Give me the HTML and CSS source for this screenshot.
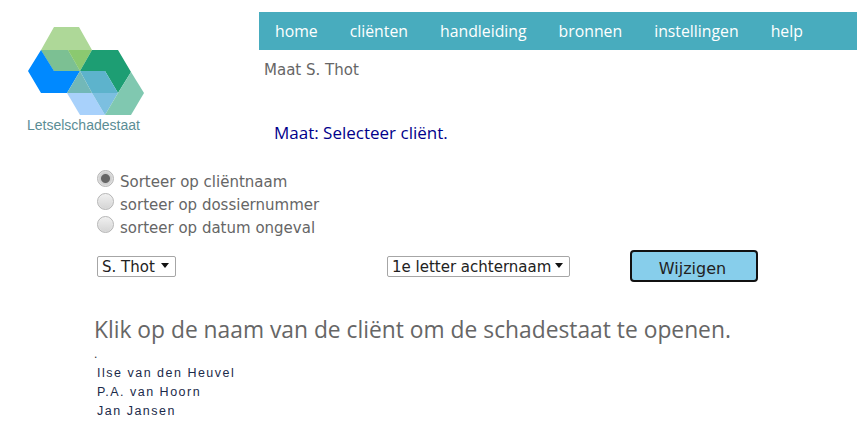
FILE: index.html
```html
<!DOCTYPE html>
<html lang="nl">
<head>
<meta charset="utf-8">
<title>Letselschadestaat</title>
<link rel="stylesheet" href="styles.css">
</head>
<body>
<header class="top">
  <div class="logo">
    <svg class="logo-mark" width="120" height="92" viewBox="27 26 120 92" aria-hidden="true">
      <polygon fill="#aed898" points="54,27 79,27 92,50 68,50 80,71 54,71 41,50"/>
      <polygon fill="#7cc093" points="41,50 68,50 80,71 54,71"/>
      <polygon fill="#8bc970" points="68,50 92,50 80,71"/>
      <polygon fill="#0089ff" points="41,50 54,71 80,71 67,93 41,93 28,71"/>
      <polygon fill="#1d9e73" points="92,50 118,50 131,72 118,93 105,71 80,71"/>
      <polygon fill="#5db3cc" points="80,71 105,71 118,93 92,93"/>
      <polygon fill="#72b8b8" points="80,71 92,93 67,93"/>
      <polygon fill="#a8d1fb" points="67,93 92,93 105,115 80,115"/>
      <polygon fill="#7cbfe0" points="92,93 118,93 105,115"/>
      <polygon fill="#80c8b0" points="118,93 131,72 144,93 131,115 105,115"/>
    </svg>
    <span class="logo-text">Letselschadestaat</span>
  </div>
  <div class="top-main">
    <nav class="menu">
      <a href="#">home</a>
      <a href="#">cliënten</a>
      <a href="#">handleiding</a>
      <a href="#">bronnen</a>
      <a href="#">instellingen</a>
      <a href="#">help</a>
    </nav>
    <div class="user">Maat S. Thot</div>
    <div class="title">Maat: Selecteer cliënt.</div>
  </div>
</header>
<main class="content">
  <form class="form">
    <div class="sort">
      <label class="sort-row"><input class="radio" type="radio" name="sort" checked>Sorteer op cliëntnaam</label>
      <label class="sort-row"><input class="radio" type="radio" name="sort">sorteer op dossiernummer</label>
      <label class="sort-row"><input class="radio" type="radio" name="sort">sorteer op datum ongeval</label>
    </div>
    <div class="controls">
      <span class="select select-user"><select><option>S. Thot</option></select></span>
      <span class="select select-letter"><select><option>1e letter achternaam</option></select></span>
      <button class="btn" type="button">Wijzigen</button>
    </div>
  </form>
  <h2 class="hint">Klik op de naam van de cliënt om de schadestaat te openen.</h2>
  <div class="dot">.</div>
  <ul class="clients">
    <li>Ilse van den Heuvel</li>
    <li>P.A. van Hoorn</li>
    <li>Jan Jansen</li>
  </ul>
</main>
</body>
</html>
```
FILE: styles.css
```css
* { box-sizing: border-box; }
html, body { margin: 0; padding: 0; background: #fff; }
body { width: 857px; height: 442px; overflow: hidden; font-family: "DejaVu Sans", sans-serif; color: #666; }

.top { display: flex; height: 158px; }
.logo { width: 259px; flex: none; padding: 26px 0 0 27px; display: flex; flex-direction: column; align-items: flex-start; }
.logo-mark { display: block; }
.logo-text { font: 14px/16px "Liberation Sans", sans-serif; color: #5b8d95; margin-top: -1px; }

.top-main { flex: 1; padding-top: 12px; }
.menu { display: flex; height: 38px; align-items: center; background: #48acbe; }
.menu a { color: #fff; text-decoration: none; font: 15.8px/38px "Open Sans", sans-serif; padding: 0 16px; }
.user { font-size: 15px; line-height: 20px; margin: 10px 0 0 5px; color: #666; }
.title { font: 17px/22px "Open Sans", sans-serif; color: #00008b; margin: 42px 0 0 15px; }

.content { padding-left: 94px; }
.form { padding-left: 3px; }
.sort { display: flex; flex-direction: column; padding-top: 12px; }
.sort-row { display: flex; align-items: flex-start; height: 23px; font-size: 15px; line-height: 24px; color: #666; }
.radio { appearance: none; width: 17px; height: 17px; margin: 0 6px 0 0; border: 1px solid #b4b4b4; border-radius: 50%; background: linear-gradient(#f0f0f0, #d4d4d4); box-shadow: inset 0 0 1px #fff; flex: none; }
.radio:checked { background: radial-gradient(circle, #666 0 4px, #ccc 5px, #e0e0e0 8px); }

.controls { display: flex; align-items: center; height: 32px; margin-top: 11px; }
.select { position: relative; display: block; height: 21px; flex: none; }
.select::after { content: ""; position: absolute; right: 7px; top: 7px; border: 4px solid transparent; border-top: 5px solid #111; border-bottom: 0; pointer-events: none; }
.select select { appearance: none; display: block; width: 100%; height: 21px; border: 1px solid #a6a6a6; border-radius: 2px; background: #fff; color: #222; font: 15px/19px "DejaVu Sans", sans-serif; padding: 1px 0 0 4px; margin: 0; }
.select-user { width: 79px; }
.select-letter { width: 183px; margin-left: 211px; }
.btn { width: 128px; height: 32px; margin-left: 60px; background: #87ceeb; border: 2px solid #111; border-radius: 4px; color: #222; font: 16px/28px "DejaVu Sans", sans-serif; padding: 3px 3px 0 0; flex: none; }

.hint { font: 400 22.8px/30px "Open Sans", sans-serif; color: #666; margin: 33px 0 0; }
.dot { font: 12px/8px "Liberation Sans", sans-serif; color: #333; margin-top: 5px; height: 10px; }
.clients { list-style: none; margin: 4px 0 0 3px; padding: 0; font: 12.5px/19px "Liberation Sans", sans-serif; letter-spacing: 1.5px; color: #1b2a4a; }
```
